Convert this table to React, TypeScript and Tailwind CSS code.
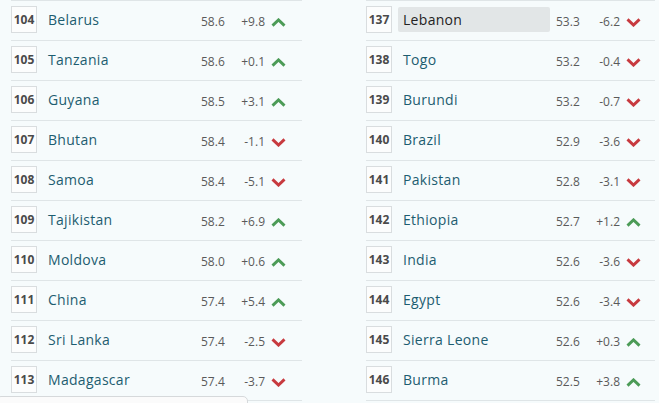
import React from 'react'

type Row = { rank: number; name: string; score: string; change: string; active?: boolean }

const left: Row[] = [
	{ rank: 104, name: 'Belarus', score: '58.6', change: '+9.8' },
	{ rank: 105, name: 'Tanzania', score: '58.6', change: '+0.1' },
	{ rank: 106, name: 'Guyana', score: '58.5', change: '+3.1' },
	{ rank: 107, name: 'Bhutan', score: '58.4', change: '-1.1' },
	{ rank: 108, name: 'Samoa', score: '58.4', change: '-5.1' },
	{ rank: 109, name: 'Tajikistan', score: '58.2', change: '+6.9' },
	{ rank: 110, name: 'Moldova', score: '58.0', change: '+0.6' },
	{ rank: 111, name: 'China', score: '57.4', change: '+5.4' },
	{ rank: 112, name: 'Sri Lanka', score: '57.4', change: '-2.5' },
	{ rank: 113, name: 'Madagascar', score: '57.4', change: '-3.7' },
]

const right: Row[] = [
	{ rank: 137, name: 'Lebanon', score: '53.3', change: '-6.2', active: true },
	{ rank: 138, name: 'Togo', score: '53.2', change: '-0.4' },
	{ rank: 139, name: 'Burundi', score: '53.2', change: '-0.7' },
	{ rank: 140, name: 'Brazil', score: '52.9', change: '-3.6' },
	{ rank: 141, name: 'Pakistan', score: '52.8', change: '-3.1' },
	{ rank: 142, name: 'Ethiopia', score: '52.7', change: '+1.2' },
	{ rank: 143, name: 'India', score: '52.6', change: '-3.6' },
	{ rank: 144, name: 'Egypt', score: '52.6', change: '-3.4' },
	{ rank: 145, name: 'Sierra Leone', score: '52.6', change: '+0.3' },
	{ rank: 146, name: 'Burma', score: '52.5', change: '+3.8' },
]

const Chevron = ({ up }: { up: boolean }) =>
	up ? (
		<svg width="15" height="9" viewBox="0 0 15 9" className="block">
			<polyline points="1.5,7.6 7.5,1.9 13.5,7.6" fill="none" stroke="#4c9b57" strokeWidth="2.9" />
		</svg>
	) : (
		<svg width="15" height="9" viewBox="0 0 15 9" className="block">
			<polyline points="1.5,1.4 7.5,7.1 13.5,1.4" fill="none" stroke="#c73a3f" strokeWidth="2.9" />
		</svg>
	)

const RankRow = ({ row }: { row: Row }) => (
	<div className="flex h-[40px] items-start border-t border-[#dfe5e7] pt-[5px]">
		<div className="flex h-[27px] w-[26px] shrink-0 items-center justify-center border border-[#d9dddf] bg-[#fcfdfd] text-[12px] font-bold text-[#4a4a4a]">
			{row.rank}
		</div>
		<div
			className={`ml-[6px] mt-[1px] flex h-[25px] w-[152px] shrink-0 items-center rounded-[2px] px-[5px] text-[14px] tracking-[0.3px] ${
				row.active ? 'bg-[#e2e6e7] text-[#222]' : 'text-[#1d5d70]'
			}`}
		>
			{row.name}
		</div>
		<div className="ml-[6px] mt-[9px] w-[34px] shrink-0 text-[12px] leading-[14px] text-[#5a5a5a]">{row.score}</div>
		<div className="mt-[9px] w-[30px] shrink-0 text-right text-[12px] leading-[14px] text-[#5a5a5a]">{row.change}</div>
		<div className="ml-[6px] mt-[12px]">
			<Chevron up={row.change.startsWith('+')} />
		</div>
	</div>
)

export default function App() {
	return (
		<div className="relative h-[403px] w-[659px] overflow-hidden bg-[#f6fbfc]" style={{ fontFamily: '"Open Sans", sans-serif' }}>
			<div className="flex gap-[64px] pl-[11px]">
				<div className="w-[291px] border-b border-[#dfe5e7]">
					{left.map((r) => (
						<RankRow key={r.rank} row={r} />
					))}
				</div>
				<div className="w-[289px] border-b border-[#dfe5e7]">
					{right.map((r) => (
						<RankRow key={r.rank} row={r} />
					))}
				</div>
			</div>
			<div className="absolute left-[-4px] top-[396px] h-[12px] w-[252px] rounded-[5px] border border-[#d6d9db] bg-[#fbfbfb]" />
		</div>
	)
}
